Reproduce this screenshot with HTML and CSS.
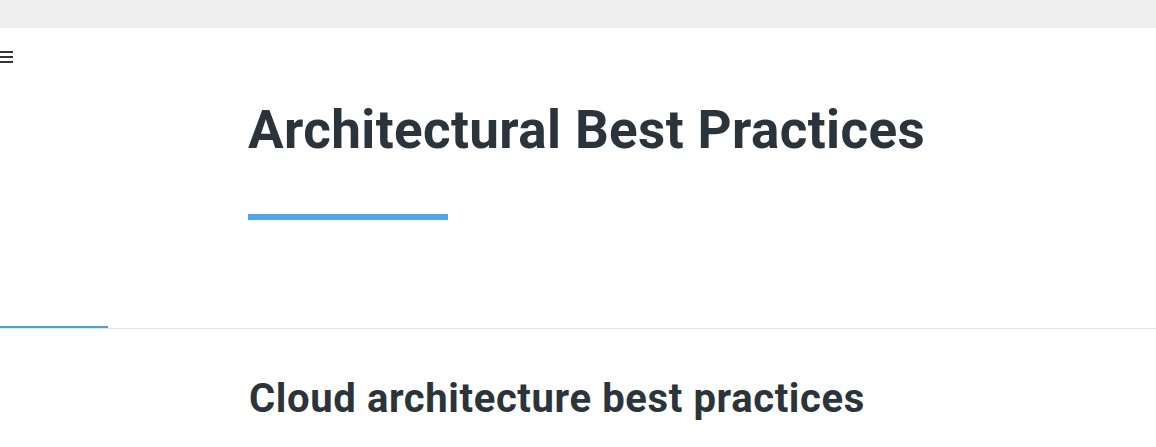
FILE: index.html
```html
<!DOCTYPE html>
<html>
<head>
<meta charset="utf-8">
<link rel="stylesheet" href="styles.css">
</head>
<body>
<div class="topbar"></div>
<div class="header">
  <div class="menu-row">
    <span class="hamburger"><i></i><i></i><i></i></span>
  </div>
  <div class="hero">
    <h1 class="title">Architectural Best Practices</h1>
    <div class="title-rule"></div>
  </div>
</div>
<div class="tabs">
  <div class="tab active"></div>
</div>
<div class="section">
  <h2 class="section-title">Cloud architecture best practices</h2>
</div>
</body>
</html>
```

FILE: styles.css
```css
html, body {
  margin: 0;
  padding: 0;
  background: #ffffff;
  font-family: "Roboto", "Open Sans", sans-serif;
  color: #2b333b;
  overflow: hidden;
}
.topbar {
  height: 28px;
  background: #eeeeee;
}
.header {
  display: flex;
  flex-direction: column;
}
.menu-row {
  height: 23px;
  padding-top: 23px;
}
.hamburger {
  display: flex;
  flex-direction: column;
  gap: 3px;
  width: 13px;
}
.hamburger i {
  display: block;
  height: 2px;
  background: #333333;
}
.hero {
  padding-left: 248px;
}
.title {
  margin: 0;
  font-size: 53px;
  font-weight: 700;
  letter-spacing: 0.37px;
  line-height: 64px;
  margin-top: 24px;
}
.title-rule {
  width: 200px;
  height: 6px;
  background: #4ea6ee;
  margin-top: 52px;
}
.tabs {
  margin-top: 106px;
  border-bottom: 1px solid #e6e6e6;
  display: flex;
}
.tab.active {
  width: 108px;
  height: 2px;
  background: #4a9fe0;
}
.section {
  padding-left: 249px;
}
.section-title {
  margin: 0;
  margin-top: 46px;
  font-size: 40px;
  font-weight: 700;
  letter-spacing: 0.62px;
  line-height: 48px;
}
```
